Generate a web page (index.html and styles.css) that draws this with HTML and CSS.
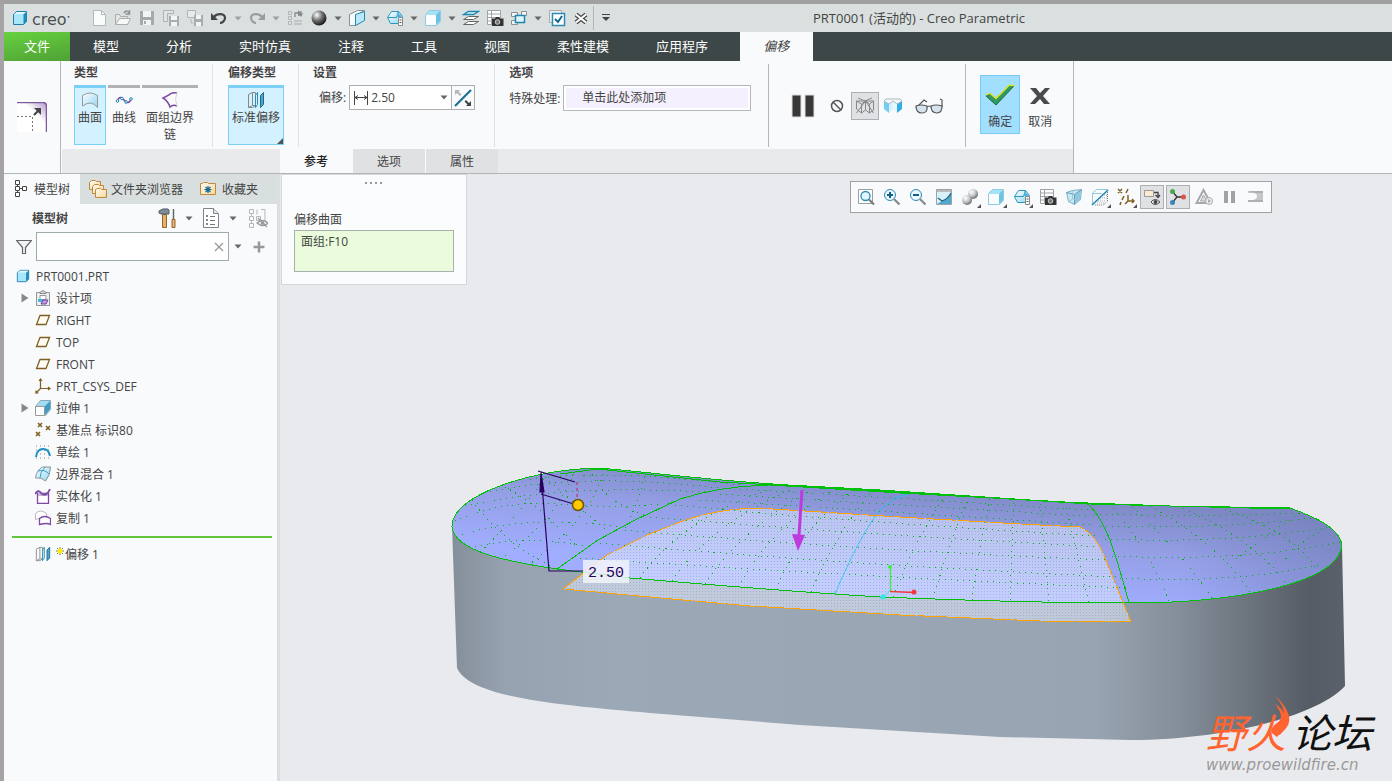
FILE: index.html
```html
<!DOCTYPE html>
<html lang="zh-CN">
<head>
    <meta charset="UTF-8">
    <meta name="viewport" content="width=device-width, initial-scale=1.0">
    <title>PRT0001 (活动的) - Creo Parametric</title>
    <link rel="stylesheet" href="styles.css">
</head>
<body>

<!-- shared icons -->
<svg class="sprite" aria-hidden="true">
    <defs>
        <linearGradient id="blueFace" x1="0" y1="0" x2="1" y2="1">
            <stop offset="0" stop-color="#ffffff"/>
            <stop offset="1" stop-color="#8fd6f2"/>
        </linearGradient>
        <linearGradient id="tan" x1="0" y1="0" x2="1" y2="1">
            <stop offset="0" stop-color="#fffaf0"/>
            <stop offset="1" stop-color="#f6d79e"/>
        </linearGradient>
        <linearGradient id="purpleEdge" x1="0.600" y1="0.400" x2="1" y2="0">
            <stop offset="0" stop-color="#ffffff"/>
            <stop offset="1" stop-color="#b295cc"/>
        </linearGradient>
        <radialGradient id="ball" cx="0.35" cy="0.3" r="0.7">
            <stop offset="0" stop-color="#ffffff"/>
            <stop offset="0.5" stop-color="#777777"/>
            <stop offset="1" stop-color="#1c1c1c"/>
        </radialGradient>
        <radialGradient id="softBall" cx="0.35" cy="0.3" r="0.8">
            <stop offset="0" stop-color="#ffffff"/>
            <stop offset="0.5" stop-color="#c4c6c8"/>
            <stop offset="1" stop-color="#55585a"/>
        </radialGradient>
    </defs>
    <symbol id="caret" viewBox="0 0 8 5"><path d="M0.500 0.500h7l-3.500 4z" fill="#666"/></symbol>
    <symbol id="part" viewBox="0 0 16 16">
        <path d="M1.500 4.500l3-3h10v10l-3 3h-10z" fill="#a8e6fb" stroke="#1f7fa8"/>
        <path d="M11.500 4.500l3-3v10l-3 3z" fill="#1f8cba"/>
        <path d="M2 4l3-2h9l-3 2z" fill="#e4f8ff"/>
    </symbol>
    <symbol id="cube" viewBox="0 0 18 18">
        <path d="M1.500 5.500l4-4h11v11l-4 4h-11z" fill="#a6e2f5" stroke="#8fcbe2"/>
        <path d="M2 6h10v10h-10z" fill="#fbfdfe"/>
        <path d="M12 6l4-4v10l-4 4z" fill="#6cc3e4"/>
    </symbol>
    <symbol id="planes" viewBox="0 0 18 18">
        <path d="M1.500 5.500l8-4h7l-7 4v7l-2 4h-6z" fill="#f8fafb" stroke="#8b9296"/>
        <path d="M7.500 5.500l9-3v9l-9 5z" fill="#b9eafc" stroke="#2388b0"/>
    </symbol>
    <symbol id="savedview" viewBox="0 0 18 18">
        <path d="M1.500 8.500l4-6h7l4 5-4 7h-8z" fill="url(#blueFace)" stroke="#2f97c2"/>
        <path d="M1.500 8.500h9l2-6" fill="none" stroke="#2f97c2"/>
        <path d="M11 3l5 5h-5z" fill="#4fb0d8"/>
        <path d="M12.500 8.500h4v8h-4z" fill="#fff" stroke="#888"/>
        <path d="M13.500 11h2M13.500 13.500h2" stroke="#555"/>
    </symbol>
    <symbol id="camera" viewBox="0 0 18 18">
        <path d="M1.500 1.500h13v14h-13zM1.500 5h13M1.500 8.500h13M1.500 12h13M5.500 1.500v14" fill="#fff" stroke="#a0a3a5"/>
        <path d="M6 9.500h3l1-1.500h3l1 1.500h3.500v7.500h-11.500z" fill="#333"/>
        <circle cx="11.500" cy="13" r="2.300" fill="#777" stroke="#ccc"/>
    </symbol>
    <symbol id="plane" viewBox="0 0 16 16"><path d="M5 3.500h9.500l-3.500 9h-9.500z" fill="#fffdf5" stroke="#806020" stroke-width="1.300"/></symbol>
    <symbol id="offset" viewBox="0 0 18 18">
        <path d="M1.500 3.500l4-2v13l-4 2zM5.500 1.500h3v13h-3M1.500 16.500h4l3-2" fill="none" stroke="#888"/>
        <path d="M8.500 4.500l2-3v12l-2 3z" fill="#d3effb" stroke="#2a8db7"/>
        <path d="M13.500 4.500l3-3v12l-3 3z" fill="#55a5c8" stroke="#176a90"/>
    </symbol>
    <symbol id="folder" viewBox="0 0 18 18">
        <path d="M1.500 14.500v-11h2l1-1h4l1 1h7v11z" fill="url(#tan)" stroke="#c08a3c"/>
    </symbol>
    <symbol id="corner" viewBox="0 0 5 5"><path d="M5 0v5h-5z" fill="#555"/></symbol>
</svg>

<header class="titlebar">
    <div class="brand">
        <svg class="icon-16"><use href="#part"/></svg>
        <span class="brand-name">creo<sup>•</sup></span>
    </div>
    <div class="quick">
        <button class="q-btn" aria-label="新建"><svg class="icon-18" viewBox="0 0 18 18"><path d="M3.500 1.500h8l4 4v11h-12z" fill="#fafbfb" stroke="#b4b8b9"/><path d="M11.500 1.500v4h4" fill="none" stroke="#b4b8b9"/></svg></button>
        <button class="q-btn" aria-label="打开"><svg class="icon-18" viewBox="0 0 18 18"><path d="M1.500 15.500v-10h4l1 2h7v3" fill="#e4e6e6" stroke="#a9adad"/><path d="M1.500 15.500l4-6h11l-3 6z" fill="#f6f7f7" stroke="#a9adad"/><path d="M10 4c2-3 4-2 5 0M15.500 1v4h-4" fill="none" stroke="#8d9191" stroke-width="1.500"/></svg></button>
        <button class="q-btn" aria-label="保存"><svg class="icon-18" viewBox="0 0 18 18"><path d="M2 2h14v14h-14z" fill="#a4a9a9"/><path d="M5 2h8v6h-8zM5 11h8v5h-8z" fill="#f3f4f4"/><path d="M6 12h2v3h-2z" fill="#a4a9a9"/></svg></button>
        <button class="q-btn" aria-label="保存副本"><svg class="icon-18" viewBox="0 0 18 18"><path d="M1.500 12.500v-11h10v3h-6v8z" fill="#e1e4e4" stroke="#b0b4b4"/><path d="M7 7h10v10h-10z" fill="#a9adad"/><path d="M9 7h6v4h-6zM9 13h6v4h-6z" fill="#f3f4f4"/></svg></button>
        <button class="q-btn" aria-label="保存备份"><svg class="icon-18" viewBox="0 0 18 18"><path d="M1.500 1.500h8v7h-8z" fill="#e9ebeb" stroke="#b0b4b4"/><path d="M5 10v4h2" fill="none" stroke="#b0b4b4"/><path d="M8 6h9v11h-9z" fill="#a9adad"/><path d="M10 6h5v4h-5zM10 13h5v4h-5z" fill="#f3f4f4"/></svg></button>
        <button class="q-btn" aria-label="撤消"><svg class="icon-18" viewBox="0 0 18 18"><path d="M4 8c3-4 11-4 11 1 0 3-3 5-5 5" fill="none" stroke="#444" stroke-width="2.200"/><path d="M1 4v7h7z" fill="#444"/></svg></button>
        <button class="q-caret" aria-label="撤消列表"><svg class="caret faded"><use href="#caret"/></svg></button>
        <button class="q-btn" aria-label="重做"><svg class="icon-18" viewBox="0 0 18 18"><path d="M14 8c-3-4-11-4-11 1 0 3 3 5 5 5" fill="none" stroke="#999d9d" stroke-width="2.200"/><path d="M17 4v7h-7z" fill="#999d9d"/></svg></button>
        <button class="q-caret" aria-label="重做列表"><svg class="caret faded"><use href="#caret"/></svg></button>
        <button class="q-btn" aria-label="重新生成"><svg class="icon-18" viewBox="0 0 18 18"><path d="M2.500 2.500h3v3h-3zM2.500 7.500h3v3h-3zM2.500 12.500h3v3h-3z" fill="none" stroke="#b3b7b7"/><path d="M8 12h8M8 15h8" stroke="#a5a9a9"/><path d="M9 8V4h4M15 2v4h-3" fill="none" stroke="#888" stroke-width="1.300"/><path d="M12 1l3 3-3 3zM17 4l-2 4-2-3z" fill="#888"/></svg></button>
        <button class="q-btn" aria-label="外观"><svg class="icon-18" viewBox="0 0 18 18"><circle cx="9" cy="9" r="7.500" fill="url(#ball)"/></svg></button>
        <button class="q-caret" aria-label="外观列表"><svg class="caret"><use href="#caret"/></svg></button>
        <button class="q-btn" aria-label="视图管理"><svg class="icon-18"><use href="#planes"/></svg></button>
        <button class="q-caret" aria-label="视图管理列表"><svg class="caret"><use href="#caret"/></svg></button>
        <button class="q-btn" aria-label="已保存方向"><svg class="icon-18"><use href="#savedview"/></svg></button>
        <button class="q-caret" aria-label="方向列表"><svg class="caret"><use href="#caret"/></svg></button>
        <button class="q-btn" aria-label="显示样式"><svg class="icon-18"><use href="#cube"/></svg></button>
        <button class="q-caret" aria-label="样式列表"><svg class="caret"><use href="#caret"/></svg></button>
        <button class="q-btn" aria-label="层"><svg class="icon-18" viewBox="0 0 18 18"><path d="M1.500 15.500l5-3h10l-5 3z" fill="#fff" stroke="#666"/><path d="M1.500 10.500l5-3h10l-5 3z" fill="#fff" stroke="#666"/><path d="M1.500 5.500l5-3h10l-5 3z" fill="#e3f6fd" stroke="#1f86b0" stroke-width="1.300"/></svg></button>
        <button class="q-btn" aria-label="视图图像"><svg class="icon-18"><use href="#camera"/></svg></button>
        <button class="q-btn" aria-label="窗口"><svg class="icon-18" viewBox="0 0 18 18"><path d="M1.500 3.500h6v4h-6zM11.500 2.500h5v4h-5zM1.500 11.500h6v4h-6z" fill="#f4f5f5" stroke="#8b8f90"/><path d="M5.500 6.500h9v7h-9z" fill="#e2f5fd" stroke="#1f86b0" stroke-width="1.500"/></svg></button>
        <button class="q-caret" aria-label="窗口列表"><svg class="caret"><use href="#caret"/></svg></button>
        <button class="q-btn" aria-label="激活"><svg class="icon-18" viewBox="0 0 18 18"><path d="M1.500 1.500h12v12h-12z" fill="#eef0f0" stroke="#a9adad"/><path d="M4.500 4.500h12v12h-12z" fill="#fff" stroke="#2b8cb5" stroke-width="1.500"/><path d="M7 10l3 3 4-6" fill="none" stroke="#17698f" stroke-width="2"/></svg></button>
        <button class="q-btn" aria-label="关闭"><svg class="icon-18" viewBox="0 0 18 18"><path d="M4 5.500l10 8M14 5.500l-10 8" stroke="#444" stroke-width="4.500"/><path d="M4 5.500l10 8M14 5.500l-10 8" stroke="#fff" stroke-width="2.200"/></svg></button>
        <button class="q-more" aria-label="自定义快速访问工具栏"><svg class="icon-10" viewBox="0 0 10 10"><path d="M1 1.500h8" stroke="#444"/><path d="M1 4h8l-4 4z" fill="#444"/></svg></button>
    </div>
    <h1 class="window-title">PRT0001 (活动的) - Creo Parametric</h1>
</header>

<nav class="menubar">
    <button class="menu menu-file">文件</button>
    <button class="menu">模型</button>
    <button class="menu">分析</button>
    <button class="menu">实时仿真</button>
    <button class="menu">注释</button>
    <button class="menu">工具</button>
    <button class="menu">视图</button>
    <button class="menu">柔性建模</button>
    <button class="menu">应用程序</button>
    <button class="menu menu-active">偏移</button>
</nav>

<section class="ribbon">
    <div class="feature">
        <svg class="icon-30" viewBox="0 0 30 30">
            <path d="M0 0h26q4 0 4 4v26h-30z" fill="url(#purpleEdge)"/>
            <path d="M0 9h21v21h-21z" fill="#fff" fill-opacity="0.900"/>
            <path d="M0 0.500h26q3.500 0 3.500 4v25.500" fill="none" stroke="#7d5a9c" stroke-width="1.500"/>
            <path d="M0 14.500h15.500v15.500" fill="none" stroke="#777" stroke-dasharray="2 2"/>
            <path d="M17 13l5-5" stroke="#444" stroke-width="2.200"/>
            <path d="M17 6h7v7z" fill="#444"/>
        </svg>
    </div>
    <div class="dashboard">
        <div class="groups">
            <div class="group">
                <h2>类型</h2>
                <div class="choices">
                    <button class="choice selected">
                        <svg class="icon-18" viewBox="0 0 18 18"><path d="M1.500 4.500q7.500-5 15 0v12q-3-4-7-4.500-4 0-8 3z" fill="url(#blueFace)" stroke="#999"/></svg>
                        <span>曲面</span>
                    </button>
                    <button class="choice">
                        <svg class="icon-18" viewBox="0 0 18 18"><path d="M2 10c3-6 5-3 7-1s5 5 7-1" fill="none" stroke="#7d3fb0" stroke-width="1.500"/><g fill="#fff" stroke="#1f86b0"><circle cx="2.500" cy="10" r="1.300"/><circle cx="7" cy="7.500" r="1.300"/><circle cx="11" cy="11" r="1.300"/><circle cx="16" cy="8" r="1.300"/></g></svg>
                        <span>曲线</span>
                    </button>
                    <button class="choice choice-wide">
                        <svg class="icon-18" viewBox="0 0 18 18"><path d="M16 2q-6-1-8 2l-6 3q5 3 7 9 3-3 7-1" fill="none" stroke="#7d4aa3" stroke-width="1.500"/><path d="M16 2q-3 6 0 13" fill="none" stroke="#d5d5d5"/></svg>
                        <span>面组边界链</span>
                    </button>
                </div>
            </div>
            <div class="group group-kind">
                <h2>偏移类型</h2>
                <div class="choices">
                    <button class="choice choice-wide selected">
                        <svg class="icon-18"><use href="#offset"/></svg>
                        <span>标准偏移</span>
                        <svg class="choice-corner"><use href="#corner"/></svg>
                    </button>
                </div>
            </div>
            <div class="group group-settings">
                <h2>设置</h2>
                <div class="field">
                    <label for="offsetValue">偏移:</label>
                    <div class="combo">
                        <svg class="icon-16" viewBox="0 0 16 16"><path d="M1.500 1v14M14.500 1v14M2 7.500h12M5 5.500l-3 2 3 2M11 5.500l3 2-3 2" fill="none" stroke="#444"/></svg>
                        <input type="text" id="offsetValue" value="2.50">
                        <button aria-label="最近使用的值"><svg class="caret"><use href="#caret"/></svg></button>
                    </div>
                    <button class="flip" aria-label="反向"><svg class="icon-18" viewBox="0 0 18 18"><path d="M1 17l16-16" stroke="#1c6f93" stroke-width="2.200"/><path d="M1 1h5l-1.500 1.500 3 3-1.500 1.500-3-3-2 2z" fill="#b5b5b5"/><path d="M17 17h-5l1.500-1.500-3-3 1.500-1.500 3 3 2-2z" fill="#444"/></svg></button>
                </div>
            </div>
            <div class="group group-options">
                <h2>选项</h2>
                <div class="field">
                    <label for="special">特殊处理:</label>
                    <button class="collector" id="special"><span>单击此处添加项</span></button>
                </div>
            </div>
            <div class="group preview">
                <button aria-label="暂停"><svg class="icon-pause" viewBox="0 0 24 24"><path d="M1 1h9v22h-9zM14 1h9v22h-9z" fill="#383838" stroke="#ddd"/></svg></button>
                <button aria-label="无预览"><svg class="icon-16" viewBox="0 0 16 16"><circle cx="8" cy="8" r="5.500" fill="none" stroke="#555" stroke-width="1.500"/><path d="M4 4l8 8" stroke="#555" stroke-width="1.500"/></svg></button>
                <button class="pressed" aria-label="分离"><svg class="icon-20" viewBox="0 0 20 20"><path d="M1.500 5l5 3v9l-5-4zM6.500 8l4-3v9l-4 3M10.500 5l4 3v9l-4-3M14.500 8l4-3v9l-4 3M1.500 5h17M3 2l7 3 7-3M1.500 17l9-12 8 12" fill="none" stroke="#888"/></svg></button>
                <button aria-label="连接"><svg class="icon-20" viewBox="0 0 20 20"><path d="M1 5l5 3v9l-5-4z" fill="#74cdf1"/><path d="M6 8l4-3v8l-4 4z" fill="#d8f2fc"/><path d="M10 5l4 3v9l-4-4z" fill="#e9f7fd"/><path d="M14 8l5-3v8l-5 4z" fill="#31aee2"/><path d="M1 5l2-2h14l2 2-5 3-4-3-4 3z" fill="#f5f9fb" stroke="#a9b8c2"/></svg></button>
                <button class="glasses" aria-label="几何预览"><svg class="icon-glasses" viewBox="0 0 28 18"><path d="M1 11l8-8 3 2M27 10v-7l-2-1" fill="none" stroke="#555" stroke-width="1.200"/><path d="M1 9q5-2 11 0 1 7-5 7-6 0-6-7zM16 9q5-2 11 0 0 7-5 7-6 0-6-7z" fill="#d4e3ec" stroke="#555" stroke-width="1.200"/><path d="M12 10q2-2 4 0" fill="none" stroke="#555"/></svg></button>
            </div>
            <div class="group confirm">
                <button class="confirm-btn ok">
                    <svg class="icon-28" viewBox="0 0 28 28"><path d="M0 14l4-2 6 5 13-13h5l-18 19z" fill="#2f9a62" stroke="#1c6b3f"/><path d="M0 13l4-1.500 6 5 13-13h5" fill="none" stroke="#d9e61a" stroke-width="1.300"/></svg>
                    <span>确定</span>
                </button>
                <button class="confirm-btn">
                    <svg class="icon-28" viewBox="0 0 28 28"><path d="M4 6h6l4 5 5-5h5l-7 8 7 8h-6l-4-5-5 5h-5l7-8z" fill="#4a4a4a"/></svg>
                    <span>取消</span>
                </button>
            </div>
        </div>
        <div class="slides">
            <button class="slide slide-active">参考</button>
            <button class="slide">选项</button>
            <button class="slide">属性</button>
        </div>
    </div>
</section>

<main class="workspace">
    <aside class="navigator">
        <div class="nav-tabs">
            <button class="nav-tab nav-tab-active"><svg class="icon-18" viewBox="0 0 18 18"><path d="M2.500 0.500h4v4h-4zM2.500 6.500h4v4h-4zM2.500 12.500h4v4h-4zM9.500 6.500h4v4h-4z" fill="#fff" stroke="#444"/><path d="M4.500 5v1M4.500 11v1M7 8.500h2" stroke="#444"/></svg>模型树</button>
            <button class="nav-tab"><svg class="icon-20" viewBox="0 0 20 20"><g fill="url(#tan)" stroke="#c08a3c"><path d="M1.500 10.500v-7l2-2h4l1 1h4v8z"/><path d="M4.500 14.500v-7l2-2h4l1 1h4v8z"/><path d="M7.500 18.500v-8l2-1h3l1 1h5v8z"/></g></svg>文件夹浏览器</button>
            <button class="nav-tab nav-tab-fav"><svg class="icon-18" viewBox="0 0 18 18"><use href="#folder"/><path d="M9 6v7M5.500 9.500h7M6.500 7l5 5M11.500 7l-5 5" stroke="#17698f" stroke-width="1.200"/></svg>收藏夹</button>
        </div>
        <div class="tree-head">
            <h2>模型树</h2>
            <button aria-label="设置"><svg class="icon-20" viewBox="0 0 20 20"><path d="M5.500 6.500h4v13h-4z" fill="#e3b36c" stroke="#96652a"/><path d="M2 3q3-3 9-2l1 1v4h-8l-2-1z" fill="#7e8c96" stroke="#55606a"/><path d="M16.500 1v10" stroke="#666" stroke-width="1.500"/><path d="M15 11.500h3v8h-3z" fill="#e3b36c" stroke="#96652a"/></svg></button>
            <button class="head-caret" aria-label="设置列表"><svg class="caret"><use href="#caret"/></svg></button>
            <button aria-label="显示"><svg class="icon-20" viewBox="0 0 20 20"><path d="M2.500 0.500h10l5 5v14h-15z" fill="#fff" stroke="#7d858a"/><path d="M12.500 0.500v5h5" fill="#e5e8ea" stroke="#7d858a"/><g stroke="#777"><path d="M9 8.500h5M9 12.500h5M9 16.500h5"/><path d="M5.500 7.500h1v1h-1zM5.500 11.500h1v1h-1zM5.500 15.500h1v1h-1z"/></g></svg></button>
            <button class="head-caret" aria-label="显示列表"><svg class="caret"><use href="#caret"/></svg></button>
            <button class="head-last" aria-label="树过滤器"><svg class="icon-20" viewBox="0 0 20 20"><g fill="none" stroke="#b5b8ba"><path d="M1.500 1.500h4v4h-4zM1.500 8.500h4v4h-4zM1.500 15.500h4v4h-4zM8.500 8.500h4v4h-4zM9 1.500v5M13 1.500h4v12M3.500 6v2M3.500 13v2"/></g><path d="M9 15q5-5 11 0-5 5-11 0zM10 10l9 9" fill="#eee" stroke="#999" stroke-width="1.300"/><circle cx="14.500" cy="15" r="1.800" fill="#999"/></svg></button>
        </div>
        <div class="search-row">
            <svg class="icon-16" viewBox="0 0 16 16"><path d="M0.500 1.500h15l-6 7v6h-3v-6z" fill="#f0f2f3" stroke="#666" stroke-width="1.200"/></svg>
            <div class="search">
                <input type="text" aria-label="搜索模型树">
                <button aria-label="清除"><svg class="icon-10" viewBox="0 0 10 10"><path d="M1 1l8 8M9 1l-8 8" stroke="#999" stroke-width="1.300"/></svg></button>
            </div>
            <button aria-label="搜索选项"><svg class="caret"><use href="#caret"/></svg></button>
            <button aria-label="添加"><svg class="icon-12" viewBox="0 0 12 12"><path d="M6 0.500v11M0.500 6h11" stroke="#999" stroke-width="2.600"/></svg></button>
        </div>
        <ul class="tree">
            <li class="root"><svg class="icon-14"><use href="#part"/></svg>PRT0001.PRT</li>
            <li><svg class="twisty" viewBox="0 0 8 10"><path d="M0.500 0.500l7 4.500-7 4.500z" fill="#888"/></svg><svg class="icon-16" viewBox="0 0 16 16"><path d="M1.500 2.500h13v13h-13z" fill="#eef0f2" stroke="#929699"/><path d="M5 3.500v-1l3-2 3 2v1z" fill="#ddd" stroke="#888"/><path d="M5 5.500h6v4h-6z" fill="#fff" stroke="#999"/><path d="M3 9h7v3h-7z" fill="#4cb3dc"/><path d="M6 14l2-4h5l-2 4z" fill="#c49be0" stroke="#7540a0"/></svg>设计项</li>
            <li><span class="twisty"></span><svg class="icon-16"><use href="#plane"/></svg>RIGHT</li>
            <li><span class="twisty"></span><svg class="icon-16"><use href="#plane"/></svg>TOP</li>
            <li><span class="twisty"></span><svg class="icon-16"><use href="#plane"/></svg>FRONT</li>
            <li><span class="twisty"></span><svg class="icon-16" viewBox="0 0 16 16"><path d="M5.500 1v9.500h9.500M5.500 10.500l-5 5M4 3l1.500-2 1.500 2M13 9l2 1.500-2 1.500M1 12.500v2.500h2.500" fill="none" stroke="#806020" stroke-width="1.200"/></svg>PRT_CSYS_DEF</li>
            <li><svg class="twisty" viewBox="0 0 8 10"><path d="M0.500 0.500l7 4.500-7 4.500z" fill="#888"/></svg><svg class="icon-16" viewBox="0 0 16 16"><path d="M0.500 6.500l5-6h10v9l-5 6z" fill="#a4dcf2" stroke="#8aa8b6"/><path d="M10 6l5-5v8l-5 6z" fill="#3f9cc4"/><path d="M0.500 6.500h9v9h-9z" fill="#fff" stroke="#999"/></svg>拉伸 1</li>
            <li><span class="twisty"></span><svg class="icon-16" viewBox="0 0 16 16"><path d="M3 1l4 4M7 1l-4 4M11 4l4 4M15 4l-4 4M1 10l4 4M5 10l-4 4" stroke="#806020" stroke-width="1.600"/></svg>基准点 标识80</li>
            <li><span class="twisty"></span><svg class="icon-16" viewBox="0 0 16 16"><path d="M1 2h14M1 6h14M1 10h14M1 14h14" stroke="#888" stroke-dasharray="1 3"/><path d="M1 13q1-8 7-8t7 7" fill="none" stroke="#2290c0" stroke-width="2"/></svg>草绘 1</li>
            <li><span class="twisty"></span><svg class="icon-16" viewBox="0 0 16 16"><path d="M0.500 12q1-8 7-11h8q0 8-5 14-4-4-10-3z" fill="url(#blueFace)" stroke="#8d9498"/><path d="M3 5q7-2 11 3M10 1q-5 5-5 11" fill="none" stroke="#3b9cc4"/></svg>边界混合 1</li>
            <li><span class="twisty"></span><svg class="icon-16" viewBox="0 0 16 16"><path d="M2.500 15.500v-10h11v10z" fill="#fff" stroke="#7d4aa3" stroke-width="1.300"/><path d="M3 5h4l5 2 1-3v4h-10z" fill="#c8b5dc"/><path d="M0 6q3-5 6-1 5 5 9-4" fill="none" stroke="#7d4aa3" stroke-width="1.800"/></svg>实体化 1</li>
            <li><span class="twisty"></span><svg class="icon-16" viewBox="0 0 16 16"><path d="M0.500 9.500v-6q5-5 11 0v6q-6-3-11 0z" fill="#fff" stroke="#bbb"/><path d="M4.500 14.500v-6q5-4 11 0v6q-3-2-11 0z" fill="#fff" stroke="#7d4aa3" stroke-width="1.300"/></svg>复制 1</li>
        </ul>
        <ul class="tree tree-pending">
            <li><span class="twisty"></span><svg class="icon-16"><use href="#offset"/></svg><svg class="spark" viewBox="0 0 8 8"><path d="M4 0v8M0 4h8M1 1l6 6M7 1l-6 6" stroke="#555" stroke-width="0.800"/><circle cx="4" cy="4" r="2.500" fill="#ffee00"/></svg>偏移 1</li>
        </ul>
    </aside>

    <section class="canvas">
        <svg class="scene" viewBox="280 174 1112 607" preserveAspectRatio="xMinYMin meet">
            <defs>
                <linearGradient id="wall" gradientUnits="userSpaceOnUse" x1="452" y1="0" x2="1345" y2="0">
                    <stop offset="0" stop-color="#848f9a"/>
                    <stop offset="0.060" stop-color="#96a2b0"/>
                    <stop offset="0.180" stop-color="#9ba8b6"/>
                    <stop offset="0.720" stop-color="#98a4b2"/>
                    <stop offset="0.820" stop-color="#838d97"/>
                    <stop offset="0.960" stop-color="#565c66"/>
                    <stop offset="1" stop-color="#5a616b"/>
                </linearGradient>
                <linearGradient id="topFace" gradientUnits="userSpaceOnUse" x1="880" y1="480" x2="870" y2="585">
                    <stop offset="0" stop-color="#7f89c6"/>
                    <stop offset="0.450" stop-color="#949fe6"/>
                    <stop offset="1" stop-color="#a1aeff"/>
                </linearGradient>
                <linearGradient id="topShade" gradientUnits="userSpaceOnUse" x1="1180" y1="0" x2="1345" y2="0">
                    <stop offset="0" stop-color="#7480bc" stop-opacity="0"/>
                    <stop offset="1" stop-color="#7480bc" stop-opacity="0.600"/>
                </linearGradient>
                <pattern id="mesh" width="3" height="3" patternUnits="userSpaceOnUse">
                    <rect width="3" height="3" fill="#e6eeff" fill-opacity="0.500"/>
                    <rect width="1" height="1" fill="#7f90c0" fill-opacity="0.450"/>
                </pattern>
                <clipPath id="topClip">
                    <path d="M452 527C451 495 530 470 598 468C660 473 720 482 807 486L880 490L1060 502L1170 506L1290 508C1315 517 1340 528 1342 545C1338 585 1230 603 1130 603C1030 603 960 600 880 597C800 592 700 584 630 578L557 569C510 562 455 552 452 527z"/>
                </clipPath>
            </defs>
            <path d="M452 526L457 668C470 698 560 705 650 713L800 725L1000 737L1130 740C1230 740 1320 714 1345 686L1342 545L1130 560L600 520z" fill="url(#wall)"/>
            <g clip-path="url(#topClip)">
                <path d="M440 460h920v160h-920z" fill="url(#topFace)"/>
                <path d="M1180 460h180v160h-180z" fill="url(#topShade)"/>
            </g>
            <path d="M563 589L607 555L647 535L680 522Q715 509 757 508L900 517L1020 524L1080 527Q1096 534 1105 558L1131 622L1040 621L900 615L750 606L650 597z" fill="url(#mesh)" shape-rendering="crispEdges"/>

            <g class="iso" clip-path="url(#topClip)">
                <path d="M580 558Q840 576 1128 588M600 543Q850 565 1118 577M625 530Q850 550 1110 560M650 517Q850 534 1104 547M675 505Q850 522 1098 536M700 500Q850 509 1092 525M720 494Q860 503 1090 516M740 489Q860 496 1088 510"/>
                <path d="M640 578Q680 520 770 489M672 581Q710 525 790 490M705 584Q740 530 810 491M738 587Q770 530 830 492M776 590Q800 530 850 492M811 592Q835 535 870 494M893 597Q915 540 945 496M933 599Q950 540 968 498M972 600Q978 550 990 499M1010 600L1014 500M1049 601L1040 502M1089 602L1065 503"/>
                <path d="M455 521Q500 500 560 504Q620 509 670 503M462 535Q520 514 622 527M475 547Q530 534 588 547M465 506Q560 484 705 492M490 492Q580 472 720 488M530 480Q600 468 740 485"/>
                <path d="M500 560Q560 515 575 470M527 566Q590 520 605 469M472 500Q500 540 550 566M505 487Q540 505 578 548M545 477Q570 500 610 533M590 469Q600 500 645 515M480 552Q520 515 545 477M625 528Q640 500 645 473"/>
                <path d="M1120 578Q1230 584 1320 565M1112 556Q1240 562 1341 542M1105 539Q1230 544 1330 527M1100 526Q1210 530 1312 518M1094 514Q1200 517 1300 513"/>
                <path d="M1169 601Q1150 550 1110 505M1212 598Q1180 550 1130 505M1250 592Q1220 545 1150 506M1285 582Q1255 540 1180 507M1315 567Q1290 530 1220 508M1300 513Q1260 540 1235 560M1330 527Q1300 540 1285 560"/>
            </g>
            <path d="M835 594Q860 535 880 510L895 498L912 493" fill="none" stroke="#19c3f0" stroke-dasharray="4 1"/>

            <g class="edges">
                <path d="M452 527C451 495 530 470 598 468C660 473 720 482 807 486L880 490L1060 502L1170 506L1290 508C1315 517 1340 528 1342 545C1338 585 1230 603 1130 603C1030 603 960 600 880 597C800 592 700 584 630 578L557 569C510 562 455 552 452 527z"/>
                <path d="M557 569L598 540L635 520L680 499Q720 486 770 485L900 493L1030 500L1100 504"/>
                <path d="M1085 502C1105 515 1116 555 1129 603"/>
                <path d="M560 474L598 469L720 482L880 491L1090 504L1290 509"/>
            </g>

            <path class="offset-edge" d="M563 589L607 555L647 535L680 522Q715 509 757 508L900 517L1020 524L1080 527Q1096 534 1105 558L1131 622L1040 621L900 615L750 606L650 597z"/>

            <!-- offset direction -->
            <path d="M802 490L799 535" stroke="#bd3bdc" stroke-width="3"/>
            <path d="M792 534l13 1-7 16z" fill="#bd3bdc"/>

            <!-- dimension and drag handle -->
            <g fill="none" stroke="#2b0060" stroke-width="1.200">
                <path d="M538 471L575 482M541 472L549 571H584M541 494L577 505"/>
                <path d="M541 474l-1 18h4z" fill="#2b0060"/>
            </g>
            <path d="M577 482v18" stroke="#c0205a" stroke-dasharray="3 3"/>
            <circle cx="578" cy="505" r="5.500" fill="#ffc800" stroke="#6b5600" stroke-width="1.500"/>
            <rect x="583" y="560" width="46" height="23" fill="#f4f6fb" fill-opacity="0.800"/>
            <text x="588" y="577" class="dim">2.50</text>

            <!-- csys -->
            <path d="M890.500 567v24" stroke="#3df03d" stroke-width="1.300"/>
            <circle cx="890" cy="567" r="2" fill="#3df03d"/>
            <path d="M890 591.500l24 1" stroke="#f23a3a" stroke-width="1.300"/>
            <circle cx="914" cy="592" r="2.500" fill="#f23a3a"/>
            <path d="M890 591l-7 6" stroke="#30e6e6"/>
            <circle cx="883" cy="597" r="2.500" fill="#30e6e6"/>
        </svg>

        <div class="slide-panel">
            <span class="grip"></span>
            <label for="quilt">偏移曲面</label>
            <textarea id="quilt" rows="2">面组:F10</textarea>
        </div>

        <div class="view-toolbar">
            <button aria-label="重新调整"><svg class="icon-18" viewBox="0 0 18 18"><path d="M1.500 1.500h14v14h-14z" fill="#fff" stroke="#9a9fa2"/><circle cx="8.500" cy="8" r="4.500" fill="#e4f6fd" stroke="#2b8cb5" stroke-width="1.300"/><path d="M12 11.500l5 5" stroke="#777" stroke-width="2"/></svg></button>
            <button aria-label="放大"><svg class="icon-18" viewBox="0 0 18 18"><circle cx="7" cy="7" r="5.500" fill="#e9f8fe" stroke="#2b8cb5"/><path d="M4 7h6M7 4v6" stroke="#155f82" stroke-width="2"/><path d="M11 11l5.500 5.500" stroke="#888" stroke-width="2.200"/></svg></button>
            <button aria-label="缩小"><svg class="icon-18" viewBox="0 0 18 18"><circle cx="7" cy="7" r="5.500" fill="#e9f8fe" stroke="#2b8cb5"/><path d="M4 7h6" stroke="#155f82" stroke-width="2"/><path d="M11 11l5.500 5.500" stroke="#888" stroke-width="2.200"/></svg></button>
            <button aria-label="重画"><svg class="icon-18" viewBox="0 0 18 18"><path d="M1.500 1.500h15v15h-15z" fill="#d9f0f9" stroke="#9aa3a8"/><path d="M2 16l5-3q7-2 9-9v12z" fill="#4fa9cf"/><path d="M2 2h14v2h-14z" fill="#bbb"/><path d="M3 10l4 3q6-2 9-8" fill="none" stroke="#1d5f7d" stroke-width="1.200"/></svg></button>
            <button aria-label="渲染选项"><svg class="icon-18" viewBox="0 0 18 18"><circle cx="12" cy="6" r="5" fill="url(#softBall)"/><circle cx="6" cy="12" r="5" fill="url(#softBall)"/></svg><svg class="corner"><use href="#corner"/></svg></button>
            <button aria-label="显示样式"><svg class="icon-18"><use href="#cube"/></svg><svg class="corner"><use href="#corner"/></svg></button>
            <button aria-label="已保存方向"><svg class="icon-18"><use href="#savedview"/></svg><svg class="corner"><use href="#corner"/></svg></button>
            <button aria-label="视图管理器"><svg class="icon-18"><use href="#camera"/></svg></button>
            <button aria-label="透视图"><svg class="icon-18" viewBox="0 0 18 18"><path d="M1.500 4.500l6-2 9-1-1 10-6 5-6-3z" fill="#c9e8f4" stroke="#7eb2c8"/><path d="M10 7l6-5-1 9-5 5z" fill="#8cc8e0"/><path d="M1.500 4.500l8 2 7-5M9.500 6.500v10" fill="none" stroke="#5d9db8"/><path d="M7.500 3v8l-4 3M7.500 11l8 1" fill="none" stroke="#9cc5d5"/></svg></button>
            <button aria-label="截面"><svg class="icon-18" viewBox="0 0 18 18"><path d="M1.500 16v-11l4-3.500h11" fill="none" stroke="#8dcbe3"/><path d="M1.500 5.500h9" stroke="#8dcbe3"/><path d="M16.500 4v9l-4 4h-9" fill="none" stroke="#777" stroke-dasharray="1 1"/><path d="M7 13h8M9 10h7M11 7h5M6 15h8" stroke="#aaa" stroke-dasharray="1 1"/><path d="M1 17l16-15" stroke="#1f86b0" stroke-width="1.500"/></svg><svg class="corner"><use href="#corner"/></svg></button>
            <button aria-label="基准显示过滤器"><svg class="icon-18" viewBox="0 0 18 18"><path d="M1 1l4 4M5 1l-4 4M11 1l-2 4M7 8l-2 4M4 14l-1 3M11 7v6h6M11 13l-3 3M15 11l2 2-2 2" fill="none" stroke="#806020" stroke-width="1.500"/></svg><svg class="corner"><use href="#corner"/></svg></button>
            <button class="pressed" aria-label="注释显示"><svg class="icon-18" viewBox="0 0 18 18"><path d="M1.500 2.500h9v6h-9z" fill="#fdebd0" stroke="#999"/><path d="M11 4.500h4v4M12.500 7l2.500 2.500 2-2.500" fill="none" stroke="#444" stroke-width="1.300"/><path d="M8 14q4-5 9 0-5 5-9 0z" fill="#fff" stroke="#444"/><circle cx="12.500" cy="14" r="2" fill="#444"/></svg></button>
            <button class="pressed" aria-label="旋转中心"><svg class="icon-18" viewBox="0 0 18 18"><path d="M3 3l5 6h7M8 9l-5 6" fill="none" stroke="#333" stroke-width="1.300"/><circle cx="3.500" cy="3.500" r="2.500" fill="#49a84d"/><circle cx="14.500" cy="9" r="2.500" fill="#d9534f"/><circle cx="3.500" cy="14.500" r="2.500" fill="#3b88b5"/></svg></button>
            <button aria-label="仿真"><svg class="icon-18" viewBox="0 0 18 18"><path d="M8.500 2l7 13h-14z" fill="none" stroke="#a4a8aa" stroke-width="2"/><path d="M8.500 7l3 6h-6z" fill="#ddd" stroke="#a4a8aa"/><circle cx="14" cy="13" r="3.500" fill="#eee" stroke="#aaa"/><path d="M13 11l3 2-3 2z" fill="#aaa"/></svg></button>
            <button aria-label="暂停仿真"><svg class="icon-18" viewBox="0 0 18 18"><path d="M3 3h4v12h-4zM10 3h4v12h-4z" fill="#a0a2a4"/></svg></button>
            <button aria-label="仿真动画"><svg class="icon-18" viewBox="0 0 18 18"><path d="M1 3h15v11h-15v-2h5q4-1 4-4t-4-3h-5z" fill="#c4c6c8"/><path d="M1 3h15v2h-8M1 12h15v2h-15z" fill="#adafb1"/></svg></button>
        </div>

        <div class="watermark">
            <div class="forum"><span class="wild">野火</span><span>论坛</span></div>
            <svg class="flame" viewBox="0 0 24 42"><path d="M9 0c8 6 16 18 14 26-2 8-8 10-12 15-6-4-7-6-5-9 4-6 8-5 9-11 0-5-3-9-6-13 5 3 8 6 9 10 0-7-4-12-9-18z" fill="#ff6430"/></svg>
            <div class="site">www.proewildfire.cn</div>
        </div>
    </section>
</main>

</body>
</html>
```
FILE: styles.css
```css
* {
    box-sizing: border-box;
}

body {
    margin: 0;
    height: 100vh;
    display: flex;
    flex-direction: column;
    border-top: 4px solid #a0a0a0;
    border-left: 4px solid #a5a3a3;
    background-color: #e9eaee;
    color: #444;
    font-family: "Open Sans", "Noto Sans CJK SC", sans-serif;
    font-size: 12px;
    line-height: 17px;
    overflow: hidden;
}

button,
input,
textarea {
    font: inherit;
    color: inherit;
    background: none;
    border: none;
    padding: 0;
    margin: 0;
    outline: none;
}

button {
    cursor: pointer;
}

svg {
    display: block;
    flex: none;
}

h1,
h2 {
    margin: 0;
    font-size: 12px;
}

h2 {
    font-weight: 600;
}

.sprite {
    position: absolute;
    width: 0;
    height: 0;
}

.icon-10 { width: 10px; height: 10px; }
.icon-12 { width: 12px; height: 12px; }
.icon-14 { width: 14px; height: 14px; }
.icon-16 { width: 16px; height: 16px; }
.icon-18 { width: 18px; height: 18px; }
.icon-20 { width: 20px; height: 20px; }
.icon-28 { width: 28px; height: 28px; }
.icon-30 { width: 30px; height: 30px; }
.icon-pause { width: 24px; height: 24px; }
.icon-glasses { width: 28px; height: 18px; }

.caret {
    width: 8px;
    height: 5px;
}

.faded {
    opacity: 0.5;
}

/* title bar */
.titlebar {
    display: flex;
    align-items: center;
    flex: none;
    height: 28px;
    background-color: #dae0df;
}

.brand {
    display: flex;
    align-items: center;
    gap: 4px;
    width: 83px;
    padding-left: 8px;
}

.brand-name {
    font-family: "DejaVu Sans", sans-serif;
    font-size: 16px;
    color: #4a5052;
}

.brand-name sup {
    font-size: 6px;
}

.quick {
    display: flex;
    align-items: center;
}

.quick button {
    display: flex;
    align-items: center;
    justify-content: center;
    height: 24px;
}

.q-btn {
    width: 24px;
}

.q-caret {
    width: 14px;
}

.quick .q-more {
    width: 24px;
    border-left: 1px solid #b0b5b5;
}

.window-title {
    flex: 1;
    padding-left: 196px;
    font-size: 13px;
    font-weight: 400;
    white-space: nowrap;
}

/* menu */
.menubar {
    display: flex;
    flex: none;
    height: 29px;
    background-color: #3e4747;
}

.menu {
    padding: 0 24px 0 23px;
    font-size: 13px;
    color: #fff;
}

.menu-file {
    width: 66px;
    padding: 0;
    background: linear-gradient(170deg, #66d23f, #4fa035);
}

.menu-active {
    margin-left: 8px;
    background-color: #f9fafc;
    color: #444;
    font-style: italic;
}

/* ribbon */
.ribbon {
    display: flex;
    flex: none;
    background-color: #f9fafc;
    border-bottom: 1px solid #b0b5b5;
}

.feature {
    display: flex;
    align-items: center;
    width: 57px;
    padding-left: 13px;
    border-right: 1px solid #b5b7b9;
}

.dashboard {
    padding-left: 1px;
    border-right: 1px solid #b5b7b9;
}

.groups {
    display: flex;
    height: 88px;
    padding: 3px 0 2px;
}

.group {
    padding: 0 14px 0 12px;
    border-right: 1px solid #dfe1e3;
}

.group h2 {
    height: 21px;
}

.group-kind {
    padding: 0 14px 0 15px;
}

.group-settings {
    padding: 0 19px 0 14px;
}

.group-options {
    padding: 0 17px 0 14px;
    border-color: #b5b7b9;
}

.choices {
    display: flex;
    gap: 2px;
}

.choice {
    position: relative;
    display: flex;
    flex-direction: column;
    align-items: center;
    width: 32px;
    height: 60px;
    padding-top: 3px;
    border-top: 3px solid #b0b2b4;
}

.choice-wide {
    width: 56px;
}

.choice-wide span {
    width: 48px;
}

.choice.selected {
    border: 1px solid #7bd0f8;
    border-top-width: 3px;
    background-color: #d3f1fe;
}

.choice-corner {
    position: absolute;
    right: 0;
    bottom: 0;
    width: 6px;
    height: 6px;
}

.field {
    display: flex;
    align-items: center;
}

.group-settings .field {
    padding-left: 6px;
}

.field label {
    margin-right: 3px;
}

.combo {
    display: flex;
    align-items: center;
    width: 103px;
    height: 25px;
    padding: 0 3px;
    border: 1px solid #acb0b2;
    background-color: #fff;
}

.combo input {
    flex: 1;
    min-width: 0;
    padding-left: 2px;
}

.flip {
    display: flex;
    align-items: center;
    justify-content: center;
    width: 24px;
    height: 25px;
    margin-left: -1px;
    border: 1px solid #acb0b2;
}

.collector {
    width: 188px;
    height: 26px;
    padding: 2px;
    border: 1px solid #b4b8ba;
    background-color: #fff;
    text-align: left;
}

.collector span {
    display: block;
    height: 20px;
    padding-left: 16px;
    line-height: 20px;
    background-color: #f4f0fe;
}

.preview {
    display: flex;
    align-items: center;
    width: 197px;
    padding: 0 20px 0 22px;
    border-color: #b5b7b9;
}

.preview button {
    display: flex;
    align-items: center;
    justify-content: center;
    width: 28px;
    height: 28px;
}

.preview button:first-child {
    width: 24px;
    margin-right: 8px;
}

.preview .glasses {
    margin-left: 8px;
}

.pressed {
    border: 1px solid #adb0b2;
    background-color: #dfe1e4;
}

.confirm {
    display: flex;
    align-items: center;
    padding: 0 13px 3px 14px;
    border: none;
}

.confirm-btn {
    display: flex;
    flex-direction: column;
    align-items: center;
    gap: 3px;
    width: 40px;
    height: 59px;
    padding-top: 7px;
}

.confirm-btn.ok {
    border: 1px solid #76caf8;
    padding-top: 6px;
    background-color: #a2dffe;
}

.slides {
    display: flex;
    gap: 1px;
    height: 24px;
    padding-left: 218px;
    background: linear-gradient(90deg, #e9eaeb 218px, #f9fafc 218px 435px, #e9eaeb 435px);
}

.slide {
    width: 72px;
    background-color: #dfe1e3;
}

.slide-active {
    background-color: #f9fafc;
    color: #222;
    font-weight: 500;
}

/* workspace */
.workspace {
    display: flex;
    flex: 1;
    min-height: 0;
}

.navigator {
    width: 276px;
    flex: none;
    background-color: #f8fafc;
    border-right: 3px solid #d9e0df;
}

.nav-tabs {
    display: flex;
    height: 30px;
    background-color: #d9dfde;
}

.nav-tab {
    display: flex;
    align-items: center;
    gap: 3px;
    padding: 0 8px;
    white-space: nowrap;
}

.nav-tab-active {
    width: 76px;
    padding: 0 9px;
    background-color: #f8fafc;
}

.nav-tab-fav {
    gap: 5px;
}

.tree-head {
    display: flex;
    align-items: center;
    gap: 8px;
    height: 28px;
    padding: 0 9px 0 28px;
}

.tree-head h2 {
    flex: 1;
}

.tree-head .head-last {
    margin-left: 3px;
}

.search-row {
    display: flex;
    align-items: center;
    gap: 5px;
    padding: 0 12px;
}

.search-row > svg {
    margin-right: -1px;
}

.search {
    display: flex;
    align-items: center;
    flex: 1;
    height: 29px;
    padding-right: 4px;
    border: 1px solid #9eabab;
    background-color: #fff;
}

.search input {
    flex: 1;
    min-width: 0;
    padding: 0 4px;
}

.search-row > button + button {
    margin-left: 6px;
}

.tree {
    list-style: none;
    margin: 0;
    padding: 4px 8px 7px 17px;
}

.tree li {
    display: flex;
    align-items: center;
    gap: 5px;
    height: 22px;
}

.tree .root {
    gap: 6px;
    margin-left: -5px;
}

.tree .twisty {
    width: 8px;
    height: 10px;
    margin-right: 1px;
}

.tree-pending {
    margin: 0 5px 0 8px;
    padding: 5px 0 0 9px;
    border-top: 2px solid #62c63d;
}

.spark {
    width: 8px;
    height: 8px;
    margin: 0 -4px 6px 0;
}

.canvas {
    position: relative;
    flex: 1;
    min-width: 0;
    background-color: #e9eaee;
}

.scene {
    width: 100%;
    height: 100%;
}

.iso {
    fill: none;
    stroke: #00b414;
    stroke-width: 1;
    stroke-dasharray: 1 5;
    shape-rendering: crispEdges;
}

.edges {
    fill: none;
    stroke: #00c00a;
    stroke-width: 1;
    shape-rendering: crispEdges;
}

.offset-edge {
    fill: none;
    stroke: #ffa200;
    stroke-width: 1;
    stroke-dasharray: 30 2;
    shape-rendering: crispEdges;
}

.dim {
    font-family: "Liberation Mono", monospace;
    font-size: 15px;
    fill: #2b0060;
}

.slide-panel {
    position: absolute;
    top: 0;
    left: 1px;
    display: flex;
    flex-direction: column;
    width: 186px;
    padding: 7px 12px 12px;
    border: 1px solid #d5d7d9;
    background-color: #fbfcfd;
}

.grip {
    align-self: center;
    width: 18px;
    height: 2px;
    margin-bottom: 27px;
    background: repeating-linear-gradient(90deg, #999 0 2px, transparent 2px 5px);
}

.slide-panel label {
    margin-bottom: 2px;
}

.slide-panel textarea {
    height: 42px;
    padding: 2px 6px;
    border: 1px solid #a9b0ab;
    background-color: #eafcdc;
    resize: none;
}

.view-toolbar {
    position: absolute;
    top: 7px;
    right: 120px;
    display: flex;
    align-items: center;
    height: 32px;
    padding: 0 2px;
    border: 1px solid #9fa2a5;
    background-color: #f8fafc;
}

.view-toolbar button {
    position: relative;
    display: flex;
    align-items: center;
    justify-content: center;
    width: 26px;
    height: 24px;
}

.view-toolbar .pressed {
    width: 24px;
    margin: 0 1px;
}

.corner {
    position: absolute;
    right: 2px;
    bottom: 1px;
    width: 4px;
    height: 4px;
}

.watermark {
    position: absolute;
    right: 20px;
    bottom: 7px;
    font-style: italic;
}

.forum {
    display: flex;
    gap: 6px;
    font-family: "Liberation Sans", "Noto Sans CJK SC", sans-serif;
    font-size: 40px;
    font-weight: 400;
    line-height: 46px;
    color: #111;
}

.wild {
    color: #ff6430;
}

.flame {
    position: absolute;
    top: -15px;
    left: 60px;
    width: 24px;
    height: 42px;
}

.site {
    font-family: "DejaVu Sans", sans-serif;
    font-size: 15px;
    color: #999;
}
```
